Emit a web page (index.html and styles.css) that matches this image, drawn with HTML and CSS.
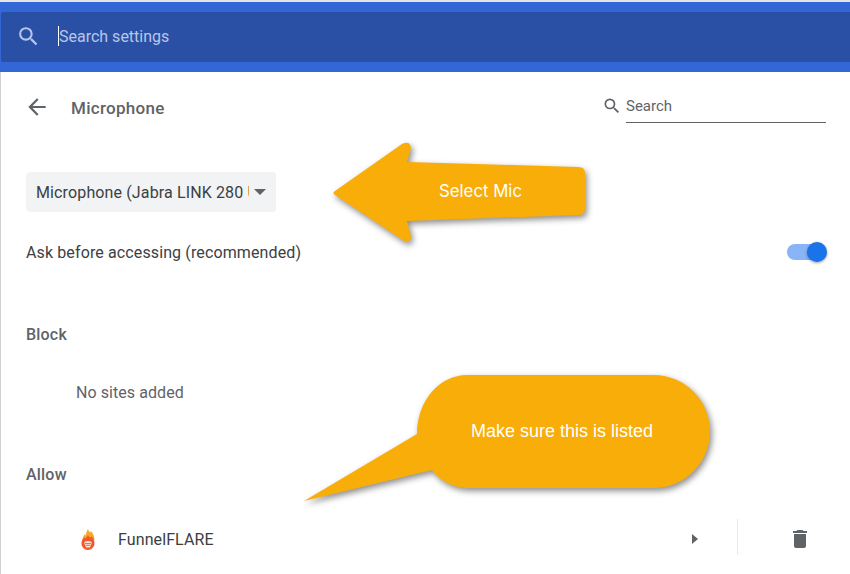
FILE: index.html
```html
<!DOCTYPE html>
<html lang="en">
<head>
<meta charset="utf-8">
<title>Microphone settings</title>
<link rel="stylesheet" href="styles.css">
</head>
<body>
<div class="page">
  <header class="topbar">
    <div class="searchbox">
      <svg class="search-icon" viewBox="0 0 24 24" width="25" height="25"><path fill="#b8c6e8" d="M15.5 14h-.79l-.28-.27A6.47 6.47 0 0 0 16 9.5 6.5 6.5 0 1 0 9.5 16c1.61 0 3.09-.59 4.23-1.57l.27.28v.79l5 4.99L20.49 19l-4.99-5zm-6 0C7.01 14 5 11.99 5 9.5S7.01 5 9.5 5 14 7.01 14 9.5 11.99 14 9.5 14z"/></svg>
      <span class="caret"></span>
      <span class="search-text">Search settings</span>
    </div>
  </header>
  <main class="content">
    <div class="subhead">
      <svg class="back" viewBox="0 0 24 24" width="26" height="26"><path fill="#5f6368" d="M20 11H7.83l5.59-5.59L12 4l-8 8 8 8 1.41-1.41L7.83 13H20v-2z"/></svg>
      <h1 class="title">Microphone</h1>
      <div class="subsearch">
        <svg viewBox="0 0 24 24" width="20" height="20"><path fill="#5f6368" d="M15.5 14h-.79l-.28-.27A6.47 6.47 0 0 0 16 9.5 6.5 6.5 0 1 0 9.5 16c1.61 0 3.09-.59 4.23-1.57l.27.28v.79l5 4.99L20.49 19l-4.99-5zm-6 0C7.01 14 5 11.99 5 9.5S7.01 5 9.5 5 14 7.01 14 9.5 11.99 14 9.5 14z"/></svg>
        <span class="subsearch-field">Search</span>
      </div>
    </div>
    <div class="select">
      <span class="select-label">Microphone (Jabra LINK 280 USB)</span>
      <span class="select-arrow"></span>
    </div>
    <div class="ask-row">
      <span>Ask before accessing (recommended)</span>
      <span class="toggle"><span class="toggle-knob"></span></span>
    </div>
    <h2 class="section-head block-head">Block</h2>
    <p class="empty">No sites added</p>
    <h2 class="section-head allow-head">Allow</h2>
    <div class="site-row">
      <svg class="flare" viewBox="0 0 16 24" width="16" height="24">
        <path fill="#f9a825" d="M8 2c.3 2 1.500 2.800 2.500 3.500.2-.8.3-1.200.2-1.800C12.800 6 14.500 9 14.500 13H2.500c0-3 1.300-4.500 2.500-6 .2.800.4 1.200.8 1.600C6 6.500 6.800 4 8 2z"/>
        <path fill="#ee5a2e" d="M8 8c.6 1.500 1.700 2.200 3 2.500l.2-1.200c1.700 1.500 3.300 3.800 3.300 7 0 3.800-2.900 6.700-6.500 6.700s-6.500-2.900-6.500-6.700c0-2.800 1.400-4.600 3-6l.5 1.200C6.200 10.700 7.500 9.500 8 8z"/>
        <path fill="#fbdccf" d="M4.500 15c1-.8 2.200-1 3.500-1s2.500.2 3.500 1c.3 1.200 0 2.200-.6 2.800L10 20.500H6l-.9-2.700c-.6-.6-.9-1.600-.6-2.800z"/>
        <path fill="none" stroke="#ee5a2e" stroke-width=".8" d="M5 16.500h6M6 18.300h4"/>
      </svg>
      <span class="site-name">FunnelFLARE</span>
      <span class="site-arrow"></span>
      <span class="site-divider"></span>
      <svg class="trash" viewBox="0 0 24 24" width="24" height="24"><path fill="#5f6368" d="M6 19c0 1.100.9 2 2 2h8c1.100 0 2-.9 2-2V7H6v12zM19 4h-3.500l-1-1h-5l-1 1H5v2h14V4z"/></svg>
    </div>
  </main>

  <div class="callout callout-arrow">
    <svg viewBox="0 0 280 120" width="280" height="120">
      <path class="callout-shape" d="M15 61 82 14Q90 10 91 18L87 32 258 37Q265 37 265 43V79Q265 85 258 85L87 91 91 106Q91 114 84 111L15 65Q12 63 15 61z"/>
    </svg>
    <span class="arrow-text">Select Mic</span>
  </div>

  <div class="callout callout-bubble">
    <svg viewBox="0 0 440 150" width="440" height="150">
      <path class="callout-shape" d="M177 10H363.500A56.500 56.500 0 0 1 363.500 123H180C164 123 151 117 142 105L14 136 127 69C127 35 150 10 177 10z"/>
    </svg>
    <span class="bubble-text">Make sure this is listed</span>
  </div>
</div>
</body>
</html>
```
FILE: styles.css
```css
* { box-sizing: border-box; }
html, body { margin: 0; padding: 0; }
body {
  width: 850px;
  height: 574px;
  overflow: hidden;
  background: #fff;
  font-family: Roboto, "Liberation Sans", sans-serif;
  color: #3c4043;
}
.page {
  position: relative;
  width: 850px;
  height: 574px;
  overflow: hidden;
  border-top: 2px solid #e4e4e4;
}
.topbar {
  height: 70px;
  background: #3367d6;
  padding: 10px 0 10px 1px;
}
.searchbox {
  height: 50px;
  background: #2a50a6;
  border-radius: 2px 0 0 2px;
  display: flex;
  align-items: center;
  padding-left: 15px;
}
.search-icon { flex: none; margin-bottom: 1px; }
.caret {
  width: 1px;
  height: 20px;
  background: #fff;
  margin-left: 17px;
  margin-bottom: 2px;
}
.search-text {
  font-size: 16px;
  color: #b9c6e6;
  margin-bottom: 2px;
}
.content {
  height: 502px;
  border-left: 1px solid #d0d0d0;
  padding: 0 24px 0 25px;
  display: flex;
  flex-direction: column;
}
.subhead {
  height: 72px;
  display: flex;
  align-items: center;
  padding-top: 1px;
}
.back { margin: 0 0 3px -2.500px; flex: none; }
.title {
  margin: 0 0 2px 21.500px;
  font-size: 17px;
  font-weight: 500;
  letter-spacing: .3px;
  color: #5f6368;
}
.subsearch {
  margin-left: auto;
  margin-bottom: 6px;
  display: flex;
  align-items: center;
  gap: 4px;
}
.subsearch-field {
  width: 200px;
  height: 33px;
  line-height: 32px;
  font-size: 15px;
  color: #5f6368;
  border-bottom: 1px solid #5f6368;
  margin-top: 1px;
}
.select {
  margin-top: 28px;
  width: 250px;
  height: 40px;
  border-radius: 4px;
  background: #f1f3f4;
  display: flex;
  align-items: center;
  padding: 0 8px 0 10px;
  font-size: 16px;
  color: #3c4043;
}
.select-label {
  width: 213px;
  white-space: nowrap;
  overflow: hidden;
  letter-spacing: .13px;
}
.select-arrow {
  margin-left: 5px;
  width: 0;
  height: 0;
  border-left: 6.500px solid transparent;
  border-right: 6.500px solid transparent;
  border-top: 6px solid #5f6368;
}
.ask-row {
  margin-top: 19px;
  height: 42px;
  display: flex;
  align-items: center;
  justify-content: space-between;
  font-size: 16px;
  color: #3c4043;
}
.ask-row > span:first-child { letter-spacing: .12px; }
.toggle {
  position: relative;
  display: block;
  width: 39px;
  height: 16px;
  border-radius: 8px;
  background: #8ab4f8;
}
.toggle-knob {
  position: absolute;
  top: -2px;
  right: -1px;
  width: 20px;
  height: 20px;
  border-radius: 50%;
  background: #1a73e8;
  box-shadow: 0 1px 3px rgba(0, 0, 0, .4);
}
.section-head {
  margin: 0;
  font-size: 16px;
  font-weight: 500;
  letter-spacing: .2px;
  color: #5f6368;
}
.block-head { margin-top: 50px; line-height: 24px; }
.empty {
  margin: 34px 0 0 50px;
  font-size: 16px;
  line-height: 24px;
  letter-spacing: .07px;
  color: #5f6368;
}
.allow-head { margin-top: 58px; line-height: 24px; }
.site-row {
  margin-top: 28px;
  height: 48px;
  display: flex;
  align-items: center;
  padding-left: 54px;
}
.flare { flex: none; }
.site-name {
  margin-left: 22px;
  font-size: 16px;
  letter-spacing: .1px;
  color: #3c4043;
}
.site-arrow {
  margin-left: auto;
  width: 0;
  height: 0;
  border-top: 5px solid transparent;
  border-bottom: 5px solid transparent;
  border-left: 6px solid #5f6368;
}
.site-divider {
  margin-left: 39px;
  width: 1px;
  height: 36px;
  margin-bottom: 4px;
  background: #e8eaed;
}
.trash { margin-left: 50px; margin-right: 14px; flex: none; }
.callout { position: absolute; }
.callout svg { display: block; overflow: visible; }
.callout-shape {
  fill: #f9ad09;
  filter: drop-shadow(2px 3px 3px rgba(0, 0, 0, .45));
}
.callout-arrow { left: 320px; top: 128px; width: 280px; height: 120px; }
.arrow-text {
  position: absolute;
  left: 119px;
  top: 51px;
  font-family: Inter, "Liberation Sans", sans-serif;
  font-size: 16.800px;
  color: #fff;
}
.callout-bubble { left: 290px; top: 363px; width: 440px; height: 150px; }
.bubble-text {
  position: absolute;
  left: 181px;
  top: 56px;
  font-family: "Liberation Sans", Arial, sans-serif;
  font-size: 18px;
  color: #fff;
}
```
